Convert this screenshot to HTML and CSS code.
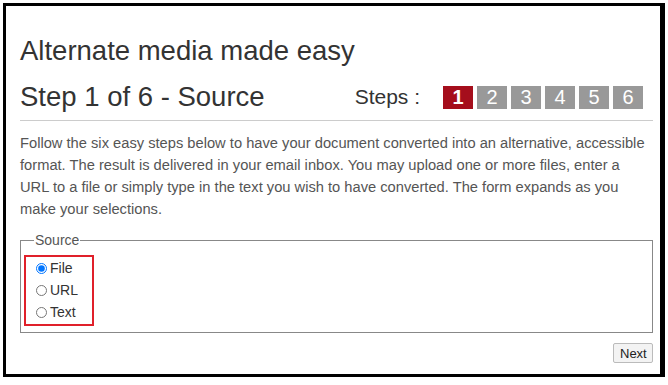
FILE: index.html
```html
<!DOCTYPE html>
<html lang="en">
<head>
<meta charset="utf-8">
<title>Alternate media made easy</title>
<link rel="stylesheet" href="styles.css">
</head>
<body>
<div class="frame">
  <h1 class="title">Alternate media made easy</h1>
  <div class="step-row">
    <h2 class="step-title">Step 1 of 6 - Source</h2>
    <div class="steps">
      <span class="steps-label">Steps :</span>
      <ol class="step-list">
        <li class="step active">1</li>
        <li class="step">2</li>
        <li class="step">3</li>
        <li class="step">4</li>
        <li class="step">5</li>
        <li class="step">6</li>
      </ol>
    </div>
  </div>
  <hr class="rule">
  <p class="intro">Follow the six easy steps below to have your document converted into an alternative, accessible format. The result is delivered in your email inbox. You may upload one or more files, enter a URL to a file or simply type in the text you wish to have converted. The form expands as you make your selections.</p>
  <fieldset class="source">
    <legend class="legend">Source</legend>
    <div class="options">
      <label class="option"><input type="radio" name="src" checked> File</label>
      <label class="option"><input type="radio" name="src"> URL</label>
      <label class="option"><input type="radio" name="src"> Text</label>
    </div>
  </fieldset>
  <div class="actions">
    <button class="next" type="button">Next</button>
  </div>
</div>
</body>
</html>
```
FILE: styles.css
```css
html, body {
  margin: 0;
  padding: 0;
  background: #fff;
}
body {
  font-family: "Liberation Sans", Arial, sans-serif;
  color: #333;
}
.frame {
  margin: 3px 5px 0 3px;
  height: 368px;
  border: 3px solid #000;
  box-shadow: 1px 1px 0 1px #000;
  padding: 0 7px 0 14px;
  box-sizing: content-box;
}
.title {
  margin: 29px 0 0 0;
  font-size: 27.5px;
  font-weight: normal;
  line-height: 32px;
  color: #333;
}
.step-row {
  display: flex;
  align-items: center;
  justify-content: space-between;
  margin-top: 17px;
  height: 26px;
}
.step-title {
  margin: 0;
  font-size: 27.5px;
  font-weight: normal;
  line-height: 32px;
  color: #333;
}
.steps {
  display: flex;
  align-items: center;
  gap: 23px;
  margin-right: 10px;
}
.steps-label {
  font-size: 21px;
  color: #333;
}
.step-list {
  display: flex;
  gap: 4px;
  margin: 0;
  padding: 0;
  list-style: none;
}
.step {
  width: 30px;
  height: 23px;
  line-height: 23px;
  text-align: center;
  font-size: 20px;
  color: #fff;
  background: #999;
}
.step.active {
  background: #a50e1c;
  font-weight: bold;
}
.rule {
  margin: 10px 0 0 0;
  border: 0;
  border-top: 1px solid #ccc;
  height: 0;
}
.intro {
  margin: 11px 4px 0 0;
  font-size: 14.7px;
  line-height: 22px;
  color: #555;
}
.source {
  margin: 12px 0 0 0;
  border: 1px solid #888;
  padding: 7px 6px 6px 3px;
}
.legend {
  font-size: 14px;
  line-height: 16px;
  color: #555;
  padding: 0 1px;
  margin-left: 10px;
}
.options {
  display: flex;
  flex-direction: column;
  width: 52px;
  border: 2px solid #e0202a;
  padding: 0 4px 1px 10px;
}
.option {
  font-size: 14px;
  line-height: 22px;
  color: #333;
  display: flex;
  align-items: center;
}
.option input {
  width: 11px;
  height: 11px;
  margin: 0 3px 0 0;
}
.actions {
  display: flex;
  justify-content: flex-end;
  margin-top: 10px;
}
.next {
  font-family: "Liberation Sans", Arial, sans-serif;
  font-size: 13px;
  color: #222;
  background: #f3f3f3;
  border: 1px solid #bbb;
  border-radius: 2px;
  padding: 1px 6px;
  height: 20px;
  width: 40px;
}
```
